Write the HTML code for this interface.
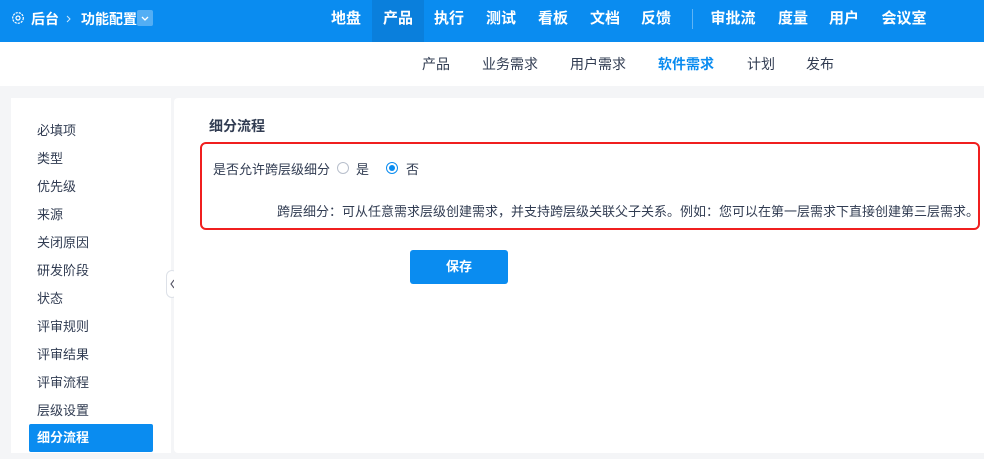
<!DOCTYPE html><html><head><meta charset="utf-8"><style>
*{margin:0;padding:0;box-sizing:border-box}
body{width:984px;height:459px;overflow:hidden;background:#f4f5f7;font-family:"Liberation Sans","Noto Sans CJK SC",sans-serif;position:relative;color:#313c52}
.top{position:absolute;left:0;top:0;width:984px;height:42px;background:#0a8cf0;color:#fff}
.abs{position:absolute;white-space:nowrap}
.nv{position:absolute;top:0;height:42px;line-height:37px;font-size:15px;font-weight:bold;color:#fff;text-align:center}
.sub{position:absolute;left:0;top:42px;width:984px;height:44px;background:#fff}
.sn{position:absolute;top:0;line-height:44px;font-size:14px;color:#313c52}
.side{position:absolute;left:11px;top:98px;width:160px;height:355px;background:#fff}
.si{position:absolute;left:26px;font-size:13px;line-height:28px;color:#313c52}
.main{position:absolute;left:174px;top:98px;width:810px;height:355px;background:#fff;border-radius:4px 0 0 4px}
</style></head><body>
<div class="top">
<svg class="abs" style="left:11px;top:11px" width="14" height="14" viewBox="0 0 14 14"><circle cx="7" cy="7" r="5.3" fill="none" stroke="#fff" stroke-width="1.2" stroke-dasharray="2.2 1"/><circle cx="7" cy="7" r="2" fill="none" stroke="#fff" stroke-width="1.2"/></svg>
<div class="abs" style="left:31px;top:9px;font-size:14px;font-weight:bold">后台</div>
<svg class="abs" style="left:65px;top:14px" width="8" height="10"><path d="M2 2l3 3-3 3" stroke="#fff" fill="none" stroke-width="1" opacity=".8"/></svg>
<div class="abs" style="left:81px;top:9px;font-size:14px;font-weight:bold">功能配置</div>
<div class="abs" style="left:137px;top:10px;width:16px;height:16px;background:rgba(255,255,255,.3);border-radius:2px"><svg width="16" height="16"><path d="M5 7l3 3 3-3" stroke="#fff" fill="none" stroke-width="1.3"/></svg></div>
<div class="nv" style="left:326px;width:40px">地盘</div>
<div class="nv" style="left:372px;width:52px;background:#0a7fdc">产品</div>
<div class="nv" style="left:429px;width:40px">执行</div>
<div class="nv" style="left:481px;width:40px">测试</div>
<div class="nv" style="left:533px;width:40px">看板</div>
<div class="nv" style="left:585px;width:40px">文档</div>
<div class="nv" style="left:636px;width:40px">反馈</div>
<div class="abs" style="left:692px;top:9px;width:1px;height:20px;background:rgba(255,255,255,.35)"></div>
<div class="nv" style="left:703px;width:60px">审批流</div>
<div class="nv" style="left:773px;width:40px">度量</div>
<div class="nv" style="left:824px;width:40px">用户</div>
<div class="nv" style="left:874px;width:60px">会议室</div>
</div>
<div class="sub">
<div class="sn" style="left:422px">产品</div>
<div class="sn" style="left:482px">业务需求</div>
<div class="sn" style="left:570px">用户需求</div>
<div class="sn" style="left:658px;color:#0a8cf0;font-weight:bold">软件需求</div>
<div class="sn" style="left:747px">计划</div>
<div class="sn" style="left:806px">发布</div>
</div>
<div class="side">
<div class="si" style="top:19px">必填项</div>
<div class="si" style="top:47px">类型</div>
<div class="si" style="top:75px">优先级</div>
<div class="si" style="top:103px">来源</div>
<div class="si" style="top:131px">关闭原因</div>
<div class="si" style="top:159px">研发阶段</div>
<div class="si" style="top:187px">状态</div>
<div class="si" style="top:215px">评审规则</div>
<div class="si" style="top:243px">评审结果</div>
<div class="si" style="top:271px">评审流程</div>
<div class="si" style="top:299px">层级设置</div>
<div class="abs" style="left:18px;top:326px;width:124px;height:28px;background:#0a8cf0;border-radius:2px;color:#fff;font-size:13px;font-weight:bold;line-height:28px;padding-left:8px">细分流程</div>
</div>
<div class="abs" style="left:166px;top:270px;width:12px;height:28px;background:#fff;border:1px solid #dde1e8;border-radius:6px"><svg width="10" height="26"><path d="M7 9l-3 4 3 4" stroke="#556" fill="none" stroke-width="1.1"/></svg></div>
<div class="main">
<div class="abs" style="left:35px;top:18px;font-size:14px;font-weight:bold;color:#313c52">细分流程</div>
<div class="abs" style="left:26px;top:44px;width:780px;height:88px;border:2px solid #f01f1f;border-radius:6px"></div>
<div class="abs" style="left:39px;top:61px;font-size:13px">是否允许跨层级细分</div>
<div class="abs" style="left:163px;top:64px;width:12px;height:12px;border:1px solid #b8bfcc;border-radius:50%"></div>
<div class="abs" style="left:182px;top:61px;font-size:13px">是</div>
<div class="abs" style="left:212px;top:64px;width:12px;height:12px;border:1px solid #0a8cf0;border-radius:50%;background:#fff"><div style="margin:2px;width:6px;height:6px;border-radius:50%;background:#0a8cf0"></div></div>
<div class="abs" style="left:232px;top:61px;font-size:13px">否</div>
<div class="abs" style="left:103px;top:103px;font-size:13px">跨层细分：可从任意需求层级创建需求，并支持跨层级关联父子关系。例如：您可以在第一层需求下直接创建第三层需求。</div>
<div class="abs" style="left:236px;top:152px;width:98px;height:34px;background:#0a8cf0;border-radius:3px;color:#fff;font-size:13px;font-weight:bold;text-align:center;line-height:34px">保存</div>
</div>
</body></html>
